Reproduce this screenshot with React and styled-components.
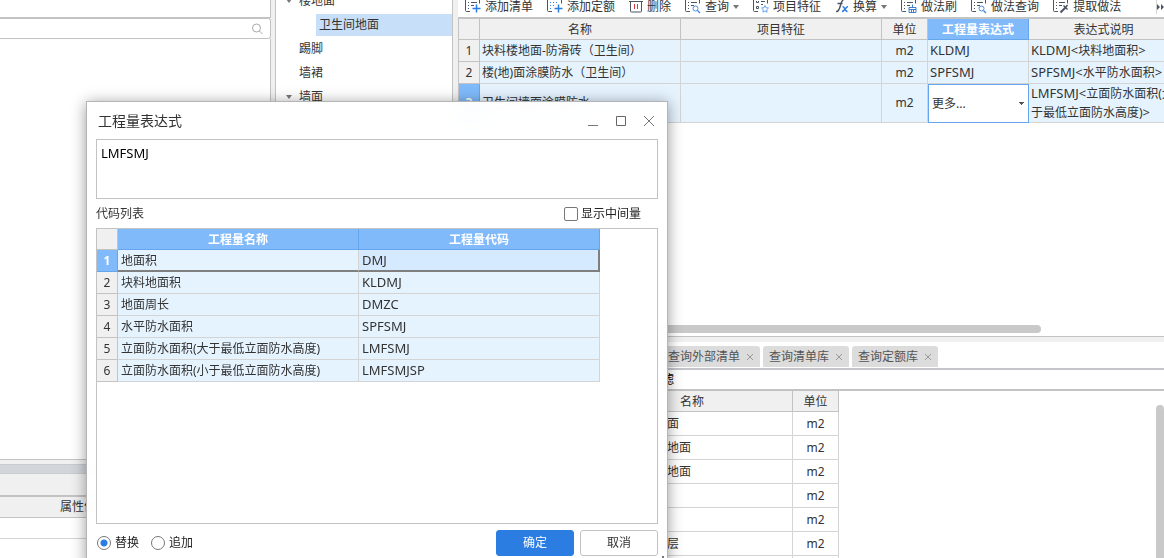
import React, { useState } from 'react'
import styled, { createGlobalStyle, css } from 'styled-components'

const GlobalStyle = createGlobalStyle`
    * {
        box-sizing: border-box;
    }
    body {
        margin: 0;
        overflow: hidden;
        background-color: #f0f0f0;
        color: #333;
        font: 12px/20px "Noto Sans", "Noto Sans CJK SC", sans-serif;
    }
    button, input, textarea, select {
        font: inherit;
        color: inherit;
    }
`

const works = [
    { name: '块料楼地面-防滑砖（卫生间）', unit: 'm2', code: 'KLDMJ', desc: '块料地面积' },
    { name: '楼(地)面涂膜防水（卫生间）', unit: 'm2', code: 'SPFSMJ', desc: '水平防水面积' },
    { name: '卫生间墙面涂膜防水', unit: 'm2', code: 'LMFSMJ', editing: true, desc: '立面防水面积(大于最低立面防水高度)' },
]

const codes = [
    ['地面积', 'DMJ'],
    ['块料地面积', 'KLDMJ'],
    ['地面周长', 'DMZC'],
    ['水平防水面积', 'SPFSMJ'],
    ['立面防水面积(大于最低立面防水高度)', 'LMFSMJ'],
    ['立面防水面积(小于最低立面防水高度)', 'LMFSMJSP'],
]

const library = [
    ['面', 'm2'],
    ['地面', 'm2'],
    ['地面', 'm2'],
    ['', 'm2'],
    ['', 'm2'],
    ['层', 'm2'],
    ['', ''],
]

const tools = [
    { label: '添加清单', icon: 'add' },
    { label: '添加定额', icon: 'quota' },
    { label: '删除', icon: 'trash' },
    { label: '查询', icon: 'search', menu: true },
    { label: '项目特征', icon: 'star' },
    { label: '换算', icon: 'fx', menu: true },
    { label: '做法刷', icon: 'brush' },
    { label: '做法查询', icon: 'search' },
    { label: '提取做法', icon: 'pick' },
]

const lines = <path d="M3 2.500h1M6 2.500h6M3 5.500h1M6 5.500h3M3 8.500h1" stroke="#4b5563" />
const dots = <path d="M3 2.500h9M3 5.500h6M3 8.500h3" stroke="#2b7de1" strokeDasharray="1 2" />
const boxes = <path d="M3.500 1v1.500h2V1M3.500 6.500h2v2h-2zM8 1.500h4M8 4.500h2" stroke="#4b5563" />
const plus = <path d="M11.500 4.500v8M7.500 8.500h8" stroke="#2b7de1" strokeWidth="1.500" />

const inner = {
    add: <>{lines}{plus}</>,
    quota: <>{dots}{plus}</>,
    search: <>{lines}<circle cx="10.500" cy="8.500" r="2.500" stroke="#4a90e2" /><path d="M12.500 10.500l2.500 2.500" stroke="#4a90e2" strokeWidth="1.500" /></>,
    star: <>{boxes}<path d="M12 5.500l1 2.200 2.500.3-1.800 1.700.4 2.500-2.100-1.200-2.100 1.200.4-2.500L8.500 8l2.500-.3z" stroke="#6aa5ee" /></>,
    brush: <>{lines}<path d="M11.500 4.500V7M8 12.500v-5h7v5zM8 9.500h7M10.500 10v2M12.500 10v2" stroke="#3f7fc6" /></>,
    pick: <>{lines}<path d="M7.500 12.500l5-5" stroke="#4b5563" strokeWidth="2" /><path d="M10.500 5.500l4 4M12.500 7.500L14.500 5" stroke="#4b5563" strokeWidth="1.500" /></>,
}

const ToolIcon = ({ name }) => {
    if (name === 'trash') {
        return (
            <svg width="14" height="14" fill="none">
                <path d="M0 1.500h14M1.500 2v9a1 1 0 0 0 1 1h9a1 1 0 0 0 1-1V2" stroke="#4b5563" />
                <path d="M5.500 4v5M8.500 4v5" stroke="#e0323c" />
            </svg>
        )
    }
    if (name === 'fx') {
        return (
            <svg width="14" height="14" fill="none">
                <path d="M8.500 0C5 0 6 11.500 1.500 11.500H1M2.500 3.500h5" stroke="#4b5563" strokeWidth="1.500" />
                <path d="M7.500 6.500c3 0 1.500 5 5 5M13 6.500c-2 0-3.500 5-6 5" stroke="#2b7de1" strokeWidth="1.500" />
            </svg>
        )
    }
    return (
        <svg width="16" height="14" fill="none">
            <path d="M.5 0v10.500a1 1 0 0 0 1 1H5M14.500 0v3.500" stroke="#4b5563" />
            {inner[name]}
        </svg>
    )
}

const Workspace = styled.div`
    position: relative;
    display: grid;
    grid-template-columns: 271px 178px minmax(0, 1fr);
    column-gap: 4px;
    height: 100vh;
    overflow: hidden;
`

const Column = styled.div`
    display: flex;
    flex-direction: column;
    min-width: 0;
    min-height: 0;
`

const Main = styled(Column)`
    margin-left: 1px;
`

const Panel = styled.div`
    background-color: #fff;
    border: 1px solid #c3c3c3;
    border-width: 0 1px 1px 0;
    height: ${props => props.$height ? `${props.$height}px` : 'auto'};
    flex: ${props => props.$height ? 'none' : 1};
`

const SearchBox = styled.label`
    display: flex;
    align-items: center;
    height: 21px;
    flex: none;
    padding-right: 7px;
    background-color: #fff;
    border: 1px solid #c3c3c3;
    border-left: 0;
    border-radius: 0 3px 3px 0;

    input {
        flex: 1;
        min-width: 0;
        height: 16px;
        border: 0;
        outline: 0;
    }
`

const Splitter = styled.div`
    height: 10px;
    flex: none;
    margin-top: 4px;
    background-color: #d2d5da;
    border: 1px solid #c8cbd0;
    border-width: 1px 0;
`

const Properties = styled.div`
    height: 63px;
    flex: none;
    margin-top: 21px;
    background-color: #fff;
    border-top: 2px solid #c3c3c3;

    table {
        width: 100%;
        border-collapse: separate;
        border-spacing: 0;
    }
    th {
        height: 21px;
        padding: 0 0 0 60px;
        text-align: left;
        font-weight: normal;
        background-color: #f0f0f0;
        border-bottom: 1px solid #c3c3c3;
    }
    td {
        height: 21px;
        padding: 0;
        border-bottom: 1px solid #d4d4d4;
    }
`

const Tree = styled.ul`
    margin: 0;
    padding: 0;
    overflow: hidden;
    list-style: none;
    background-color: #fff;
    border: 1px solid #c3c3c3;
    border-width: 0 1px;
`

const TreeItem = styled.li`
    display: flex;
    align-items: center;
    gap: 7px;
    height: 24px;
    padding-left: ${props => props.$level * 10}px;

    &:first-child {
        margin-top: -11px;
    }
    svg {
        width: 6px;
    }
    span {
        flex: 1;
        line-height: 22px;
        padding-left: ${props => props.$active ? 3 : 0}px;
        background-color: ${props => props.$active ? '#c8dffa' : 'transparent'};
    }
`

const Toolbar = styled.div`
    display: flex;
    align-items: flex-start;
    height: 17px;
    flex: none;
    padding-left: 7px;
    overflow: hidden;
    background-color: #fff;
`

const ToolButton = styled.button`
    display: flex;
    align-items: center;
    flex: none;
    gap: 4px;
    height: 14px;
    margin: 0 14px 0 0;
    padding: 0;
    border: 0;
    line-height: 14px;
    background-color: transparent;
`

const MoreButton = styled(ToolButton)`
    margin: 0 0 0 auto;
    width: 8px;
    border-left: 1px solid #d4d4d4;
`

const TableArea = styled.div`
    height: 320px;
    flex: none;
    overflow: hidden;
    background-color: #fff;
    border: 1px solid #c3c3c3;
    border-width: 2px 0 1px 1px;
    display: flex;
    flex-direction: column;
    justify-content: space-between;
`

const cell = css`
    padding: 0 2px;
    overflow: hidden;
    border: 1px solid #d4d4d4;
    border-width: 0 1px 1px 0;
`

const Grid = styled.table`
    width: ${props => props.$width}px;
    table-layout: fixed;
    border-collapse: separate;
    border-spacing: 0;
    flex: none;

    th {
        ${cell}
        height: 21px;
        line-height: 18px;
        font-weight: normal;
        background-color: #f0f0f0;
        border-color: #c3c3c3;
    }
    thead th {
        padding-top: 2px;
    }
    td {
        ${cell}
        padding-left: ${props => props.$indent || 2}px;
        height: ${props => props.$row || 22}px;
        line-height: 18px;
        background-color: ${props => props.$plain ? '#fff' : '#e5f3ff'};
    }
    td.unit {
        padding: 0;
        text-align: center;
    }
`

const Code = styled.span`
    font-size: 13px;
`

const HeadCell = styled.th`
    && {
        ${props => props.$active && css`
            color: #fff;
            font-weight: bold;
            background-color: #80bafb;
            border-color: #64a5ec;
        `}
    }
`

const EditCell = styled.td`
    && {
        padding: 0;
        background-color: #fff;
        border: 1px solid #64a5ec;
    }
    select {
        display: block;
        width: 100%;
        height: 37px;
        padding: 0 3px;
        border: 0;
        outline: 0;
        appearance: none;
        background:
            linear-gradient(45deg, transparent 50%, #555 50%) right 7px center / 3px 3px no-repeat,
            linear-gradient(-45deg, transparent 50%, #555 50%) right 4px center / 3px 3px no-repeat,
            #fff;
    }
`

const HScroll = styled.div`
    width: 582px;
    height: 8px;
    margin-bottom: 3px;
    border-radius: 4px;
    background-color: #c9c9c9;
`

const Lower = styled.div`
    display: flex;
    flex-direction: column;
    flex: 1;
    min-height: 0;
    margin-top: 5px;
    background-color: #fff;
`

const Tabs = styled.div`
    display: flex;
    gap: 3px;
    height: 28px;
    flex: none;
    padding: 4px 0 2px 204px;
    border-bottom: 2px solid #c3c5cb;
`

const Tab = styled.button`
    display: flex;
    align-items: center;
    gap: 6px;
    height: 21px;
    padding: 0 6px;
    border: 0;
    border-radius: 3px 3px 0 0;
    background-color: #dcdcdc;
    && {
        color: #555;
    }
`

const Filter = styled.div`
    height: 21px;
    flex: none;
    padding-left: 204px;
    color: #000;
    line-height: 20px;
    border-bottom: 2px solid #c3c3c3;
`

const Library = styled.div`
    display: flex;
    align-items: flex-start;
    justify-content: space-between;
    min-height: 0;
    flex: 1;
    padding-left: 134px;

    td.name {
        padding-left: 75px;
    }
`

const VScroll = styled.div`
    width: 8px;
    align-self: stretch;
    margin-top: 14px;
    border-radius: 4px 4px 0 0;
    background-color: #c9c9c9;
`

const Dialog = styled.section`
    position: absolute;
    top: 101px;
    left: 86px;
    width: 582px;
    padding: 0 9px 3px;
    border: 1px solid #b4b4b4;
    background-color: rgba(255, 255, 255, 0.96);
    backdrop-filter: blur(12px);
    box-shadow: 0 2px 14px rgba(0, 0, 0, 0.4);
`

const Grip = styled.svg`
    position: absolute;
    right: 2px;
    bottom: 1px;
`

const TitleBar = styled.header`
    display: flex;
    align-items: center;
    justify-content: space-between;
    height: 37px;

    h1 {
        margin: 0;
        padding-left: 2px;
        font-size: 14px;
        font-weight: normal;
    }
    div {
        display: flex;
        gap: 16px;
        padding-right: 3px;
    }
    button {
        display: flex;
        padding: 0;
        border: 0;
        background-color: transparent;
    }
`

const Expression = styled.textarea`
    display: block;
    width: 100%;
    height: 60px;
    padding: 3px 4px;
    resize: none;
    outline: 0;
    border: 1px solid #c3c3c3;
    background-color: #fff;
    && {
        color: #000;
        font-size: 13px;
    }
`

const ListHead = styled.div`
    display: flex;
    align-items: center;
    justify-content: space-between;
    height: 29px;
    padding-right: 17px;
`

const Choice = styled.label`
    display: flex;
    align-items: center;
    gap: ${props => props.$gap || 3}px;
    color: #222;

    input {
        appearance: none;
        width: 14px;
        height: 14px;
        margin: 0;
        border: 1px solid #777;
        border-radius: 2px;
        background-color: #fff;
    }
    input[type='radio'] {
        border-radius: 50%;
    }
    input[type='radio']:checked {
        background: radial-gradient(circle, #2b7de1 3px, #fff 4px);
    }
`

const CodeBox = styled.div`
    height: 296px;
    border: 1px solid #c3c3c3;
    background-color: #fff;
`

const CodeRow = styled.tr`
    ${props => props.$active && css`
        && th {
            color: #fff;
            font-weight: bold;
            background-color: #80bafb;
            border-color: #64a5ec;
        }
        && td {
            padding-top: 1px;
            border-bottom: 2px solid #7f7f7f;
        }
        && td:last-child {
            border-right: 2px solid #7f7f7f;
            background-color: #d5e9ff;
        }
    `}
`

const Footer = styled.footer`
    display: flex;
    align-items: center;
    justify-content: space-between;
    height: 38px;

    div {
        display: flex;
        gap: 12px;
        padding-left: 1px;
    }
    div:last-child {
        gap: 6px;
    }
`

const Button = styled.button`
    width: 78px;
    height: 26px;
    padding: 0;
    border: 1px solid ${props => props.$primary ? '#2b7de1' : '#c3c3c3'};
    border-radius: 3px;
    && {
        color: ${props => props.$primary ? '#fff' : '#333'};
    }
    background-color: ${props => props.$primary ? '#2b7de1' : '#fff'};
`

const Arrow = () => (
    <svg width="6" height="4"><path d="M0 0h6l-3 4z" fill="#777" /></svg>
)

const ExpressionDialog = () => {
    const [text, setText] = useState('LMFSMJ')
    const [mode, setMode] = useState('替换')
    return (
        <Dialog role="dialog" aria-label="工程量表达式">
            <TitleBar>
                <h1>工程量表达式</h1>
                <div>
                    <button aria-label="最小化"><svg width="12" height="12"><path d="M1 10.500h10" stroke="#777" /></svg></button>
                    <button aria-label="最大化"><svg width="12" height="12" fill="none"><path d="M1.500 1.500h9v9h-9z" stroke="#666" /></svg></button>
                    <button aria-label="关闭"><svg width="12" height="12"><path d="M1 1l10 10M11 1L1 11" stroke="#777" /></svg></button>
                </div>
            </TitleBar>
            <Expression aria-label="表达式" value={text} onChange={e => setText(e.target.value)} />
            <ListHead>
                代码列表
                <Choice><input type="checkbox" />显示中间量</Choice>
            </ListHead>
            <CodeBox>
                <Grid $width={503} $indent={3}>
                    <colgroup><col width="21" /><col width="241" /><col width="241" /></colgroup>
                    <thead>
                        <tr><th></th><HeadCell $active>工程量名称</HeadCell><HeadCell $active>工程量代码</HeadCell></tr>
                    </thead>
                    <tbody>
                        {codes.map(([name, code], i) => (
                            <CodeRow key={code} $active={i === 0}>
                                <th>{i + 1}</th><td>{name}</td><td><Code>{code}</Code></td>
                            </CodeRow>
                        ))}
                    </tbody>
                </Grid>
            </CodeBox>
            <Footer>
                <div>
                    {['替换', '追加'].map(m => (
                        <Choice key={m} $gap={4}>
                            <input type="radio" name="mode" checked={mode === m} onChange={() => setMode(m)} />{m}
                        </Choice>
                    ))}
                </div>
                <div>
                    <Button $primary>确定</Button>
                    <Button>取消</Button>
                </div>
            </Footer>
            <Grip width="8" height="8" fill="#777"><path d="M5 0h2v2h-2zM5 3h2v2h-2zM2 3h2v2H2zM5 6h2v2h-2zM2 6h2v2H2z" /></Grip>
        </Dialog>
    )
}

const App = () => (
    <Workspace>
        <GlobalStyle />
        <Column>
            <Panel $height={18} />
            <SearchBox>
                <input aria-label="搜索" />
                <svg width="12" height="12" fill="none" stroke="#aaa"><circle cx="5.500" cy="5" r="4" /><path d="M8.500 8l3 3" /></svg>
            </SearchBox>
            <Panel />
            <Splitter />
            <Properties>
                <table>
                    <thead><tr><th>属性值</th></tr></thead>
                    <tbody><tr><td /></tr></tbody>
                </table>
            </Properties>
        </Column>
        <Tree>
            <TreeItem $level={1}><Arrow /><span>楼地面</span></TreeItem>
            <TreeItem $level={4} $active><span>卫生间地面</span></TreeItem>
            <TreeItem $level={1}><svg /><span>踢脚</span></TreeItem>
            <TreeItem $level={1}><svg /><span>墙裙</span></TreeItem>
            <TreeItem $level={1}><Arrow /><span>墙面</span></TreeItem>
        </Tree>
        <Main>
            <Toolbar>
                {tools.map(t => (
                    <ToolButton key={t.label}><ToolIcon name={t.icon} />{t.label}{t.menu && <Arrow />}</ToolButton>
                ))}
                <MoreButton aria-label="更多">
                    <svg width="7" height="6" fill="#4b5563"><path d="M0 0l3 3-3 3zM4 0l3 3-3 3z" /></svg>
                </MoreButton>
            </Toolbar>
            <TableArea>
                <Grid $width={720}>
                    <colgroup>
                        <col width="21" /><col width="201" /><col width="201" /><col width="46" /><col width="101" /><col width="150" />
                    </colgroup>
                    <thead>
                        <tr>
                            <th></th><th>名称</th><th>项目特征</th><th>单位</th><HeadCell $active>工程量表达式</HeadCell><th>表达式说明</th>
                        </tr>
                    </thead>
                    <tbody>
                        {works.map((w, i) => (
                            <tr key={w.name}>
                                <HeadCell $active={w.editing}>{i + 1}</HeadCell>
                                <td>{w.name}</td>
                                <td></td>
                                <td className="unit">{w.unit}</td>
                                {w.editing
                                    ? <EditCell><select aria-label="工程量表达式"><option>更多...</option></select></EditCell>
                                    : <td><Code>{w.code}</Code></td>}
                                <td><Code>{w.code}&lt;</Code>{w.desc}<Code>&gt;</Code></td>
                            </tr>
                        ))}
                    </tbody>
                </Grid>
                <HScroll />
            </TableArea>
            <Lower>
                <Tabs>
                    {['查询外部清单', '查询清单库', '查询定额库'].map(t => (
                        <Tab key={t}>{t}<svg width="8" height="8"><path d="M1 1l6 6M7 1L1 7" stroke="#999" /></svg></Tab>
                    ))}
                </Tabs>
                <Filter>滤</Filter>
                <Library>
                    <Grid $width={247} $row={24} $plain>
                        <colgroup><col width="201" /><col width="46" /></colgroup>
                        <thead><tr><th>名称</th><th>单位</th></tr></thead>
                        <tbody>
                            {library.map(([name, unit], i) => (
                                <tr key={i}><td className="name">{name}</td><td className="unit">{unit}</td></tr>
                            ))}
                        </tbody>
                    </Grid>
                    <VScroll />
                </Library>
            </Lower>
        </Main>
        <ExpressionDialog />
    </Workspace>
)

export default App
